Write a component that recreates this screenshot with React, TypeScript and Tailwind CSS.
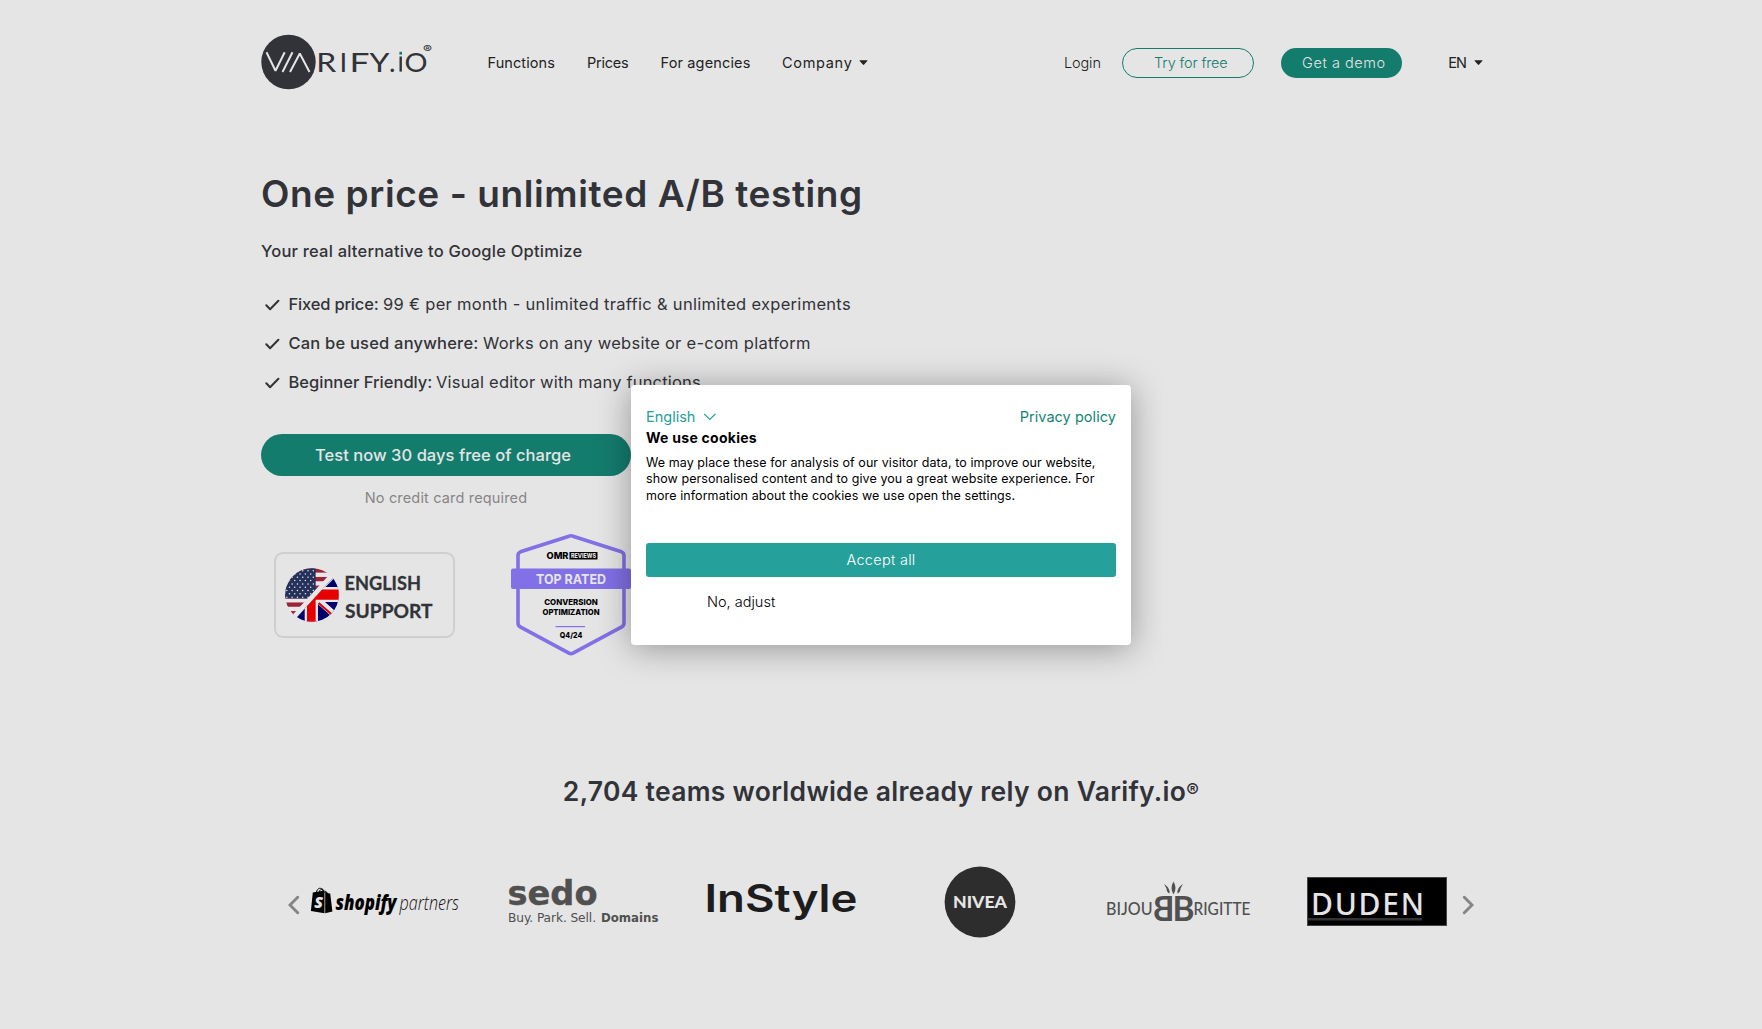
import React from "react";

const ink = "#323338";

function VarifyLogo() {
  return (
    <svg width="174" height="56" viewBox="0 0 174 56" className="-mr-[2px] shrink-0 overflow-visible">
      <circle cx="27.5" cy="27" r="27.2" fill={ink} />
      <g stroke="#e5e5e5" strokeWidth="2" fill="none">
        <polyline points="5.5,17.2 14.500,35.800 23.700,17.200" strokeLinejoin="bevel" />
        <line x1="21.500" y1="37" x2="31.500" y2="17.200" />
        <polyline points="29,37 38.800,18.500 48.500,37" strokeLinejoin="bevel" />
      </g>
      <g fill={ink} fontFamily="Lato, sans-serif" fontSize="27.5" fontWeight="400">
        <text x="55.300" y="36.600" textLength="20" lengthAdjust="spacingAndGlyphs">R</text>
        <text x="78.600" y="36.600">I</text>
        <text x="88.500" y="36.600" textLength="20" lengthAdjust="spacingAndGlyphs">F</text>
        <text x="108.500" y="36.600" textLength="20" lengthAdjust="spacingAndGlyphs">Y</text>
        <text x="128" y="36.600">.</text>
        <text x="143.600" y="36.600" textLength="23" lengthAdjust="spacingAndGlyphs">O</text>
      </g>
      <rect x="138.500" y="21.500" width="2.400" height="15.100" fill={ink} />
      <rect x="138.400" y="16.800" width="2.600" height="2.800" fill="#147c6d" />
      <text x="162" y="17.500" fill={ink} fontFamily="Inter, sans-serif" fontSize="10.500" fontWeight="600" textLength="9" lengthAdjust="spacingAndGlyphs">®</text>
    </svg>
  );
}

function Caret() {
  return (
    <svg width="9" height="6" viewBox="0 0 9 6" className="shrink-0">
      <path d="M1 .3h7q.9 0 .3.7L5.1 4.600q-.6.6-1.200 0L.7 1Q.1.3 1 .3z" fill="#222" />
    </svg>
  );
}

function Check() {
  return (
    <svg width="15" height="12" viewBox="0 0 15 12" className="shrink-0">
      <path d="M1.300 6.200l3.800 4L13.400 1.700" fill="none" stroke={ink} strokeWidth="2" strokeLinecap="round" strokeLinejoin="round" />
    </svg>
  );
}

function Flag() {
  const stars: [number, number][] = [];
  for (let r = 0; r < 9; r++) {
    for (let c = 0; c < 6; c++) {
      stars.push([80 + c * 16 + (r % 2) * 8, 148 + r * 10]);
    }
  }
  return (
    <svg width="54" height="54" viewBox="75 140 162 163" className="shrink-0">
      <defs>
        <clipPath id="round"><circle cx="156" cy="221.500" r="81" /></clipPath>
        <clipPath id="upper"><path d="M60 120H249L78 307H60z" /></clipPath>
        <clipPath id="lower"><path d="M253 132V320H82z" /></clipPath>
      </defs>
      <g clipPath="url(#round)">
        <rect x="70" y="130" width="180" height="180" fill="#e8e8ea" />
        <g clipPath="url(#upper)">
          {[141, 167, 193, 219, 244, 270].map((y) => (
            <rect key={y} x="70" y={y} width="180" height="13" fill="#9d2436" />
          ))}
          <rect x="70" y="130" width="97" height="102" fill="#26315b" />
          {stars.filter(([x]) => x < 163).map(([x, y]) => (
            <circle key={`${x}-${y}`} cx={x} cy={y} r="2.300" fill="#e8e8ea" />
          ))}
        </g>
        <g clipPath="url(#lower)">
          <rect x="70" y="130" width="180" height="180" fill="#00006c" />
          <path d="M240 140L82 300M150 215L245 300" stroke="#e8e8ea" strokeWidth="19" />
          <path d="M132 252L85 298M176 246L245 306" stroke="#e10000" strokeWidth="6" />
          <path d="M134 130H174V310H134zM70 197H250V243H70z" fill="#e8e8ea" />
          <path d="M141 130H167V310H141zM70 205H250V236H70z" fill="#e60000" />
        </g>
        <path d="M249 120L78 307" stroke="#e8e8ea" strokeWidth="6" />
      </g>
    </svg>
  );
}

function OmrBadge() {
  return (
    <svg width="120" height="124" viewBox="511 532 120 124" className="shrink-0">
      <path
        d="M569 535.200Q571 534.400 573 535.200L621.500 550.800Q624 551.800 624 554.500V622Q624 624.600 621.800 625.800L573 652.200Q571 653.300 569 652.200L520.200 625.800Q518 624.600 518 622V554.500Q518 551.800 520.500 550.800Z"
        fill="none" stroke="#8170e6" strokeWidth="3.600"
      />
      <rect x="511" y="567.500" width="120" height="20.500" rx="2" fill="#8170e6" />
      <rect x="569.500" y="551" width="28" height="7.500" fill="#000" />
      <g fontFamily="Inter, sans-serif" textAnchor="middle">
        <text x="557.500" y="557.700" fontSize="8.800" fontWeight="800" textLength="22" lengthAdjust="spacingAndGlyphs">OMR</text>
        <text x="583.500" y="557.200" fontSize="6.600" fontWeight="800" fill="#e5e5e5" textLength="25" lengthAdjust="spacingAndGlyphs">REVIEWS</text>
        <text x="571" y="582.700" fontSize="13.600" fontWeight="700" fill="#e5e5e5" textLength="70" lengthAdjust="spacingAndGlyphs">TOP RATED</text>
        <text x="571" y="603.800" fontSize="8" fontWeight="800" textLength="53.500" lengthAdjust="spacingAndGlyphs">CONVERSION</text>
        <text x="571" y="614.200" fontSize="8" fontWeight="800" textLength="57" lengthAdjust="spacingAndGlyphs">OPTIMIZATION</text>
        <text x="571" y="637.200" fontSize="7.600" fontWeight="800" textLength="22.500" lengthAdjust="spacingAndGlyphs">Q4/24</text>
      </g>
      <rect x="555.500" y="625" width="29.500" height="1.200" fill="#8170e6" />
    </svg>
  );
}

function Arrow({ flip = false }: { flip?: boolean }) {
  return (
    <svg width="12" height="20" viewBox="0 0 12 20" className={flip ? "mt-[7px] shrink-0 -scale-x-100" : "mt-[7px] shrink-0"}>
      <path d="M9.700 2.200L2 10l7.700 7.800" fill="none" stroke="#858585" strokeWidth="2.900" strokeLinecap="round" />
    </svg>
  );
}

function Shopify() {
  return (
    <svg width="149" height="71" viewBox="311 865 149 71" className="shrink-0 overflow-visible">
      <path d="M312.800 891.500L324.500 889.400V912.300L310.900 909.900z" fill="#000" />
      <path d="M325.200 889.600l3 2.600 2 .4 2.200 18-7.200 1.600z" fill="#000" />
      <path d="M316 893c.5-4.500 3-6.300 4.700-5.600 2 .6 2.300 3 2.300 5M318.800 892.600c.6-4 3-5.400 4.200-4.200.8.700 1 2 1 3.500" fill="none" stroke="#000" strokeWidth="1" />
      <text x="314.200" y="907.300" fontFamily="Open Sans, sans-serif" fontSize="16" fontWeight="800" fontStyle="italic" fill="#e5e5e5">S</text>
      <text x="335.500" y="908.700" fontFamily="Open Sans, sans-serif" fontSize="20.500" fontWeight="800" fontStyle="italic" textLength="61" lengthAdjust="spacingAndGlyphs">shopify</text>
      <text x="399.500" y="908.700" fontFamily="Open Sans, sans-serif" fontSize="20.500" fontWeight="300" fontStyle="italic" textLength="59.500" lengthAdjust="spacingAndGlyphs" fill="#111">partners</text>
    </svg>
  );
}

function Sedo() {
  return (
    <svg width="152" height="71" viewBox="508 865 152 71" className="shrink-0 overflow-visible" fill="#505050" fontFamily="DejaVu Sans, sans-serif">
      <text x="507.500" y="903.700" fontSize="34" fontWeight="700" stroke="#505050" strokeWidth="0.400" textLength="90" lengthAdjust="spacingAndGlyphs">sedo</text>
      <text x="508" y="920.900" fontSize="12.200" textLength="88">Buy. Park. Sell.</text>
      <text x="601" y="920.900" fontSize="12.200" fontWeight="700" textLength="57.500" lengthAdjust="spacingAndGlyphs">Domains</text>
    </svg>
  );
}

function InStyle() {
  return (
    <svg width="150" height="71" viewBox="707 865 150 71" className="shrink-0 overflow-visible">
      <text x="704.500" y="911.200" fontFamily="Inter, sans-serif" fontSize="38" fontWeight="600" fill="#1d1d1d" textLength="153" lengthAdjust="spacingAndGlyphs">InStyle</text>
    </svg>
  );
}

function Nivea() {
  return (
    <svg width="72" height="72" viewBox="944 864.500 72 72" className="shrink-0">
      <circle cx="980" cy="900.500" r="35.400" fill="#2d2d2d" />
      <text x="980" y="906.600" textAnchor="middle" fontFamily="Lato, sans-serif" fontSize="17" fontWeight="900" fill="#e5e5e5" textLength="54" lengthAdjust="spacingAndGlyphs">NIVEA</text>
    </svg>
  );
}

function BijouBrigitte() {
  return (
    <svg width="145" height="71" viewBox="1106 865 145 71" className="shrink-0 overflow-visible" fill="#505050" fontFamily="Lato, sans-serif">
      <text x="1106" y="914" fontSize="16.500" fontWeight="500" textLength="46.500" lengthAdjust="spacingAndGlyphs">BIJOU</text>
      <text x="1193.500" y="914" fontSize="16.500" fontWeight="500" textLength="57" lengthAdjust="spacingAndGlyphs">RIGITTE</text>
      <text x="-1174.500" y="919.800" transform="scale(-1 1)" fontSize="34" fontWeight="700" textLength="21.500" lengthAdjust="spacingAndGlyphs">B</text>
      <text x="1172.500" y="919.800" fontSize="34" fontWeight="700" textLength="22" lengthAdjust="spacingAndGlyphs">B</text>
      <path d="M1173.500 880.500Q1177.500 887.500 1173.500 893.500Q1169.500 887.500 1173.500 880.500zM1164 883Q1170.500 887 1169.500 892.500Q1166.500 891 1166.500 887.500zM1183 883Q1176.500 887 1177.500 892.500Q1180.500 891 1180.500 887.500z" />
    </svg>
  );
}

function Duden() {
  return (
    <svg width="140" height="49" viewBox="1307 876 140 49" className="shrink-0">
      <rect x="1307.500" y="876.500" width="139" height="48" fill="#000" stroke="#444" />
      <rect x="1308" y="917" width="114" height="2.500" fill="#333" />
      <text x="1311" y="913.700" fontFamily="Noto Sans, sans-serif" fontSize="30" fontWeight="500" fill="#e5e5e5" textLength="113">DUDEN</text>
    </svg>
  );
}

function CookieDialog() {
  return (
    <div className="absolute left-[631px] top-[385px] flex h-[260px] w-[500px] flex-col rounded-[4px] bg-white px-[15px] text-black shadow-[0_3px_34px_rgba(0,0,0,0.36)]">
      <div className="mt-[21px] flex h-[22px] items-center text-[14.500px] text-[#26a09a]">
        <span>English</span>
        <svg width="14" height="8" viewBox="0 0 14 8" className="ml-[8px]">
          <path d="M1.200 1l5.600 5.500L12.400 1" fill="none" stroke="#26a09a" strokeWidth="1.100" />
        </svg>
        <span className="ml-auto tracking-[0.050px] text-[#148574]">Privacy policy</span>
      </div>
      <h2 className="flex h-[19px] items-center text-[14px] font-bold tracking-[0.270px]">We use cookies</h2>
      <div className="mt-[7.500px] whitespace-nowrap text-[12.500px] leading-[16.600px] tracking-[0.080px]">
        <p>We may place these for analysis of our visitor data, to improve our website,</p>
        <p>show personalised content and to give you a great website experience. For</p>
        <p>more information about the cookies we use open the settings.</p>
      </div>
      <button className="mt-[38.500px] h-[34px] shrink-0 rounded-[3px] bg-[#26a09a] text-[14.500px] font-light tracking-[0.280px] text-white">Accept all</button>
      <button className="mt-[15.500px] h-[20px] self-start pl-[61px] text-[14.500px] font-light leading-[20px]">No, adjust</button>
    </div>
  );
}

export default function App() {
  return (
    <div className="relative h-[1029px] overflow-hidden bg-[#e5e5e5] font-['Inter',sans-serif] text-[#323338]">
      <div className="mx-auto w-[1240px] whitespace-nowrap">
        <header className="flex h-[126px] items-center text-[14.500px] text-[#222]">
          <VarifyLogo />
          <nav className="ml-[54.500px] flex items-center gap-[32px]">
            <a className="w-[67.500px] tracking-[0.090px]">Functions</a>
            <a className="w-[41.500px] tracking-[-0.220px]">Prices</a>
            <a className="w-[89.500px] tracking-[0.150px]">For agencies</a>
            <a className="flex items-center gap-[7px] tracking-[0.690px]">Company <Caret /></a>
          </nav>
          <a className="ml-auto font-light tracking-[-0.090px] text-[#222]">Login</a>
          <a className="ml-[21.500px] flex h-[30px] w-[132px] items-center justify-center rounded-full border border-[#147c6d] pl-[5px] font-light tracking-[-0.150px] text-[#147c6d]">Try for free</a>
          <a className="ml-[27px] flex h-[30px] w-[121px] items-center justify-center rounded-full bg-[#147c6d] pl-[4px] font-light tracking-[0.550px] text-[#e5e5e5]">Get a demo</a>
          <a className="ml-[46px] mr-[18px] flex items-center gap-[8px] tracking-[-1px]">EN <Caret /></a>
        </header>

        <main>
          <h1 className="mt-[46px] text-[37px] font-semibold leading-[44px] tracking-[0.580px]">One price - unlimited A/B testing</h1>
          <p className="mt-[23px] text-[16.500px] font-medium leading-[24px] tracking-[0.210px]">Your real alternative to Google Optimize</p>
          <ul className="mt-[22px] text-[16.500px]">
            <li className="flex h-[39px] items-center pl-[4px]">
              <Check />
              <b className="ml-[8.500px] w-[94.500px] font-medium tracking-[-0.180px]">Fixed price:</b>
              <span className="tracking-[0.300px]">99 € per month - unlimited traffic &amp; unlimited experiments</span>
            </li>
            <li className="flex h-[39px] items-center pl-[4px]">
              <Check />
              <b className="ml-[8.500px] w-[194.500px] font-medium tracking-[0.200px]">Can be used anywhere:</b>
              <span className="tracking-[0.270px]">Works on any website or e-com platform</span>
            </li>
            <li className="flex h-[39px] items-center pl-[4px]">
              <Check />
              <b className="ml-[8.500px] w-[147.500px] font-medium">Beginner Friendly:</b>
              <span className="tracking-[0.190px]">Visual editor with many functions</span>
            </li>
          </ul>
          <div className="mt-[32px] flex w-[370px] flex-col items-center">
            <button className="h-[42px] w-full rounded-full bg-[#147c6d] pr-[6px] text-[16.500px] font-medium tracking-[0.040px] text-[#e5e5e5]">Test now 30 days free of charge</button>
            <p className="mt-[12px] text-[14.500px] leading-[20px] tracking-[0.160px] text-[#858585]">No credit card required</p>
          </div>
          <div className="mt-[25px] flex items-center pl-[13px]">
            <div className="flex h-[86px] w-[181px] items-center rounded-[9px] border-2 border-[#cfcfcf] pl-[9px]">
              <Flag />
              <svg width="90" height="54" viewBox="0 0 90 54" className="ml-[6px] overflow-visible" fontFamily="Lato, sans-serif" fontSize="19.500" fontWeight="700" fill={ink} stroke={ink} strokeWidth="0.300">
                <text x="-0.500" y="21.500" textLength="76.500" lengthAdjust="spacingAndGlyphs">ENGLISH</text>
                <text x="0" y="49.500" textLength="87.500" lengthAdjust="spacingAndGlyphs">SUPPORT</text>
              </svg>
            </div>
            <div className="ml-[56px]"><OmrBadge /></div>
          </div>

          <h2 className="mt-[118px] h-[32px] text-center text-[26.500px] font-semibold leading-[32px] tracking-[0.280px]">
            2,704 teams worldwide already rely on Varify.io<span className="relative -top-[4px] text-[19px] leading-none">®</span>
          </h2>
          <div className="mt-[58.500px] flex h-[72px] items-center pl-[27px]">
            <Arrow />
            <div className="ml-[11px]"><Shopify /></div>
            <div className="ml-[48px]"><Sedo /></div>
            <div className="ml-[47px]"><InStyle /></div>
            <div className="ml-[87px]"><Nivea /></div>
            <div className="ml-[90px]"><BijouBrigitte /></div>
            <div className="ml-[56px]"><Duden /></div>
            <div className="ml-[15px]"><Arrow flip /></div>
          </div>
        </main>
      </div>
      <CookieDialog />
    </div>
  );
}
